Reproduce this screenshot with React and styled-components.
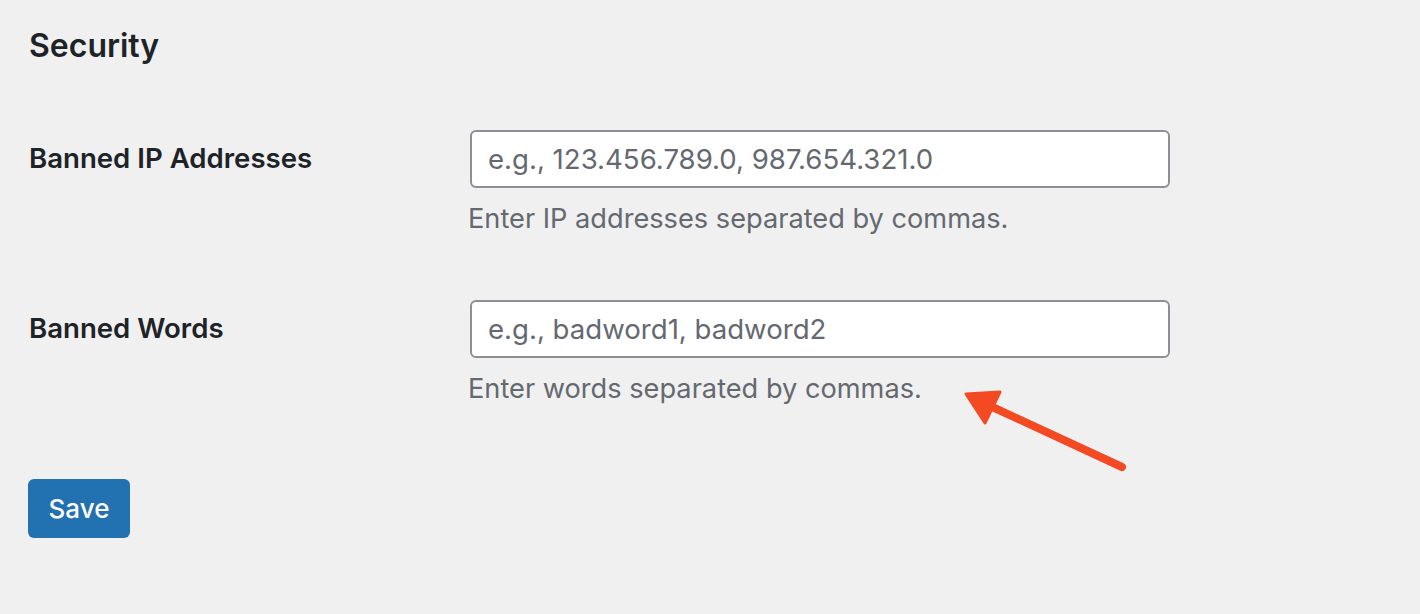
import React from 'react'
import styled, { createGlobalStyle } from 'styled-components'

const GlobalStyle = createGlobalStyle`
  html, body {
    margin: 0;
    padding: 0;
    background: #f0f0f1;
  }
  body {
    font-family: Inter, "Noto Sans", "Liberation Sans", sans-serif;
    color: #1d2327;
  }
`

const fields = [
  {
    label: 'Banned IP Addresses',
    placeholder: 'e.g., 123.456.789.0, 987.654.321.0',
    description: 'Enter IP addresses separated by commas.'
  },
  {
    label: 'Banned Words',
    placeholder: 'e.g., badword1, badword2',
    description: 'Enter words separated by commas.'
  }
]

const App = () => {
  return (
    <Page>
      <GlobalStyle />
      <Title>Security</Title>
      <Form onSubmit={e => e.preventDefault()}>
        {fields.map(field => (
          <Row key={field.label}>
            <Label>{field.label}</Label>
            <Field>
              <Input type="text" placeholder={field.placeholder} />
              <Description>{field.description}</Description>
            </Field>
          </Row>
        ))}
        <SaveButton type="submit">Save</SaveButton>
      </Form>
      <Arrow width="200" height="110" viewBox="0 0 200 110">
        <line x1="182" y1="97" x2="48" y2="35" stroke="#f44a24" strokeWidth="8" strokeLinecap="round" />
        <polygon points="26,24 60,22 45,53" fill="#f44a24" stroke="#f44a24" strokeWidth="3" strokeLinejoin="round" />
      </Arrow>
    </Page>
  )
}

export default App

const Page = styled.div`
  position: relative;
  width: 1420px;
  height: 614px;
  padding: 23px 0 0 29px;
  box-sizing: border-box;
  overflow: hidden;
`

const Title = styled.h2`
  margin: 0;
  font-size: 32px;
  line-height: 46px;
  font-weight: 600;
  color: #1d2327;
`

const Form = styled.form`
  display: flex;
  flex-direction: column;
  align-items: flex-start;
  margin-top: 61px;
`

const Row = styled.div`
  display: grid;
  grid-template-columns: 441px 700px;
  align-items: start;
  & + & {
    margin-top: 63px;
  }
`

const Label = styled.label`
  padding-top: 8px;
  font-size: 27.6px;
  line-height: 40px;
  font-weight: 600;
  color: #1d2327;
`

const Field = styled.div`
  display: flex;
  flex-direction: column;
`

const Input = styled.input`
  box-sizing: border-box;
  width: 700px;
  height: 58px;
  padding: 0 16px;
  border: 2px solid #8c8f94;
  border-radius: 6px;
  background: #fff;
  font-family: inherit;
  font-size: 27.6px;
  color: #2c3338;
  outline: none;
  &::placeholder {
    color: #646970;
  }
`

const Description = styled.p`
  margin: 13px 0 0 -2px;
  font-size: 27.2px;
  line-height: 36px;
  color: #646970;
`

const SaveButton = styled.button`
  margin-top: 72px;
  margin-left: -1px;
  width: 102px;
  height: 59px;
  border: none;
  border-radius: 6px;
  background: #2271b1;
  color: #fff;
  font-family: inherit;
  font-size: 26px;
  font-weight: 500;
  cursor: pointer;
`

const Arrow = styled.svg`
  position: absolute;
  left: 940px;
  top: 370px;
`
